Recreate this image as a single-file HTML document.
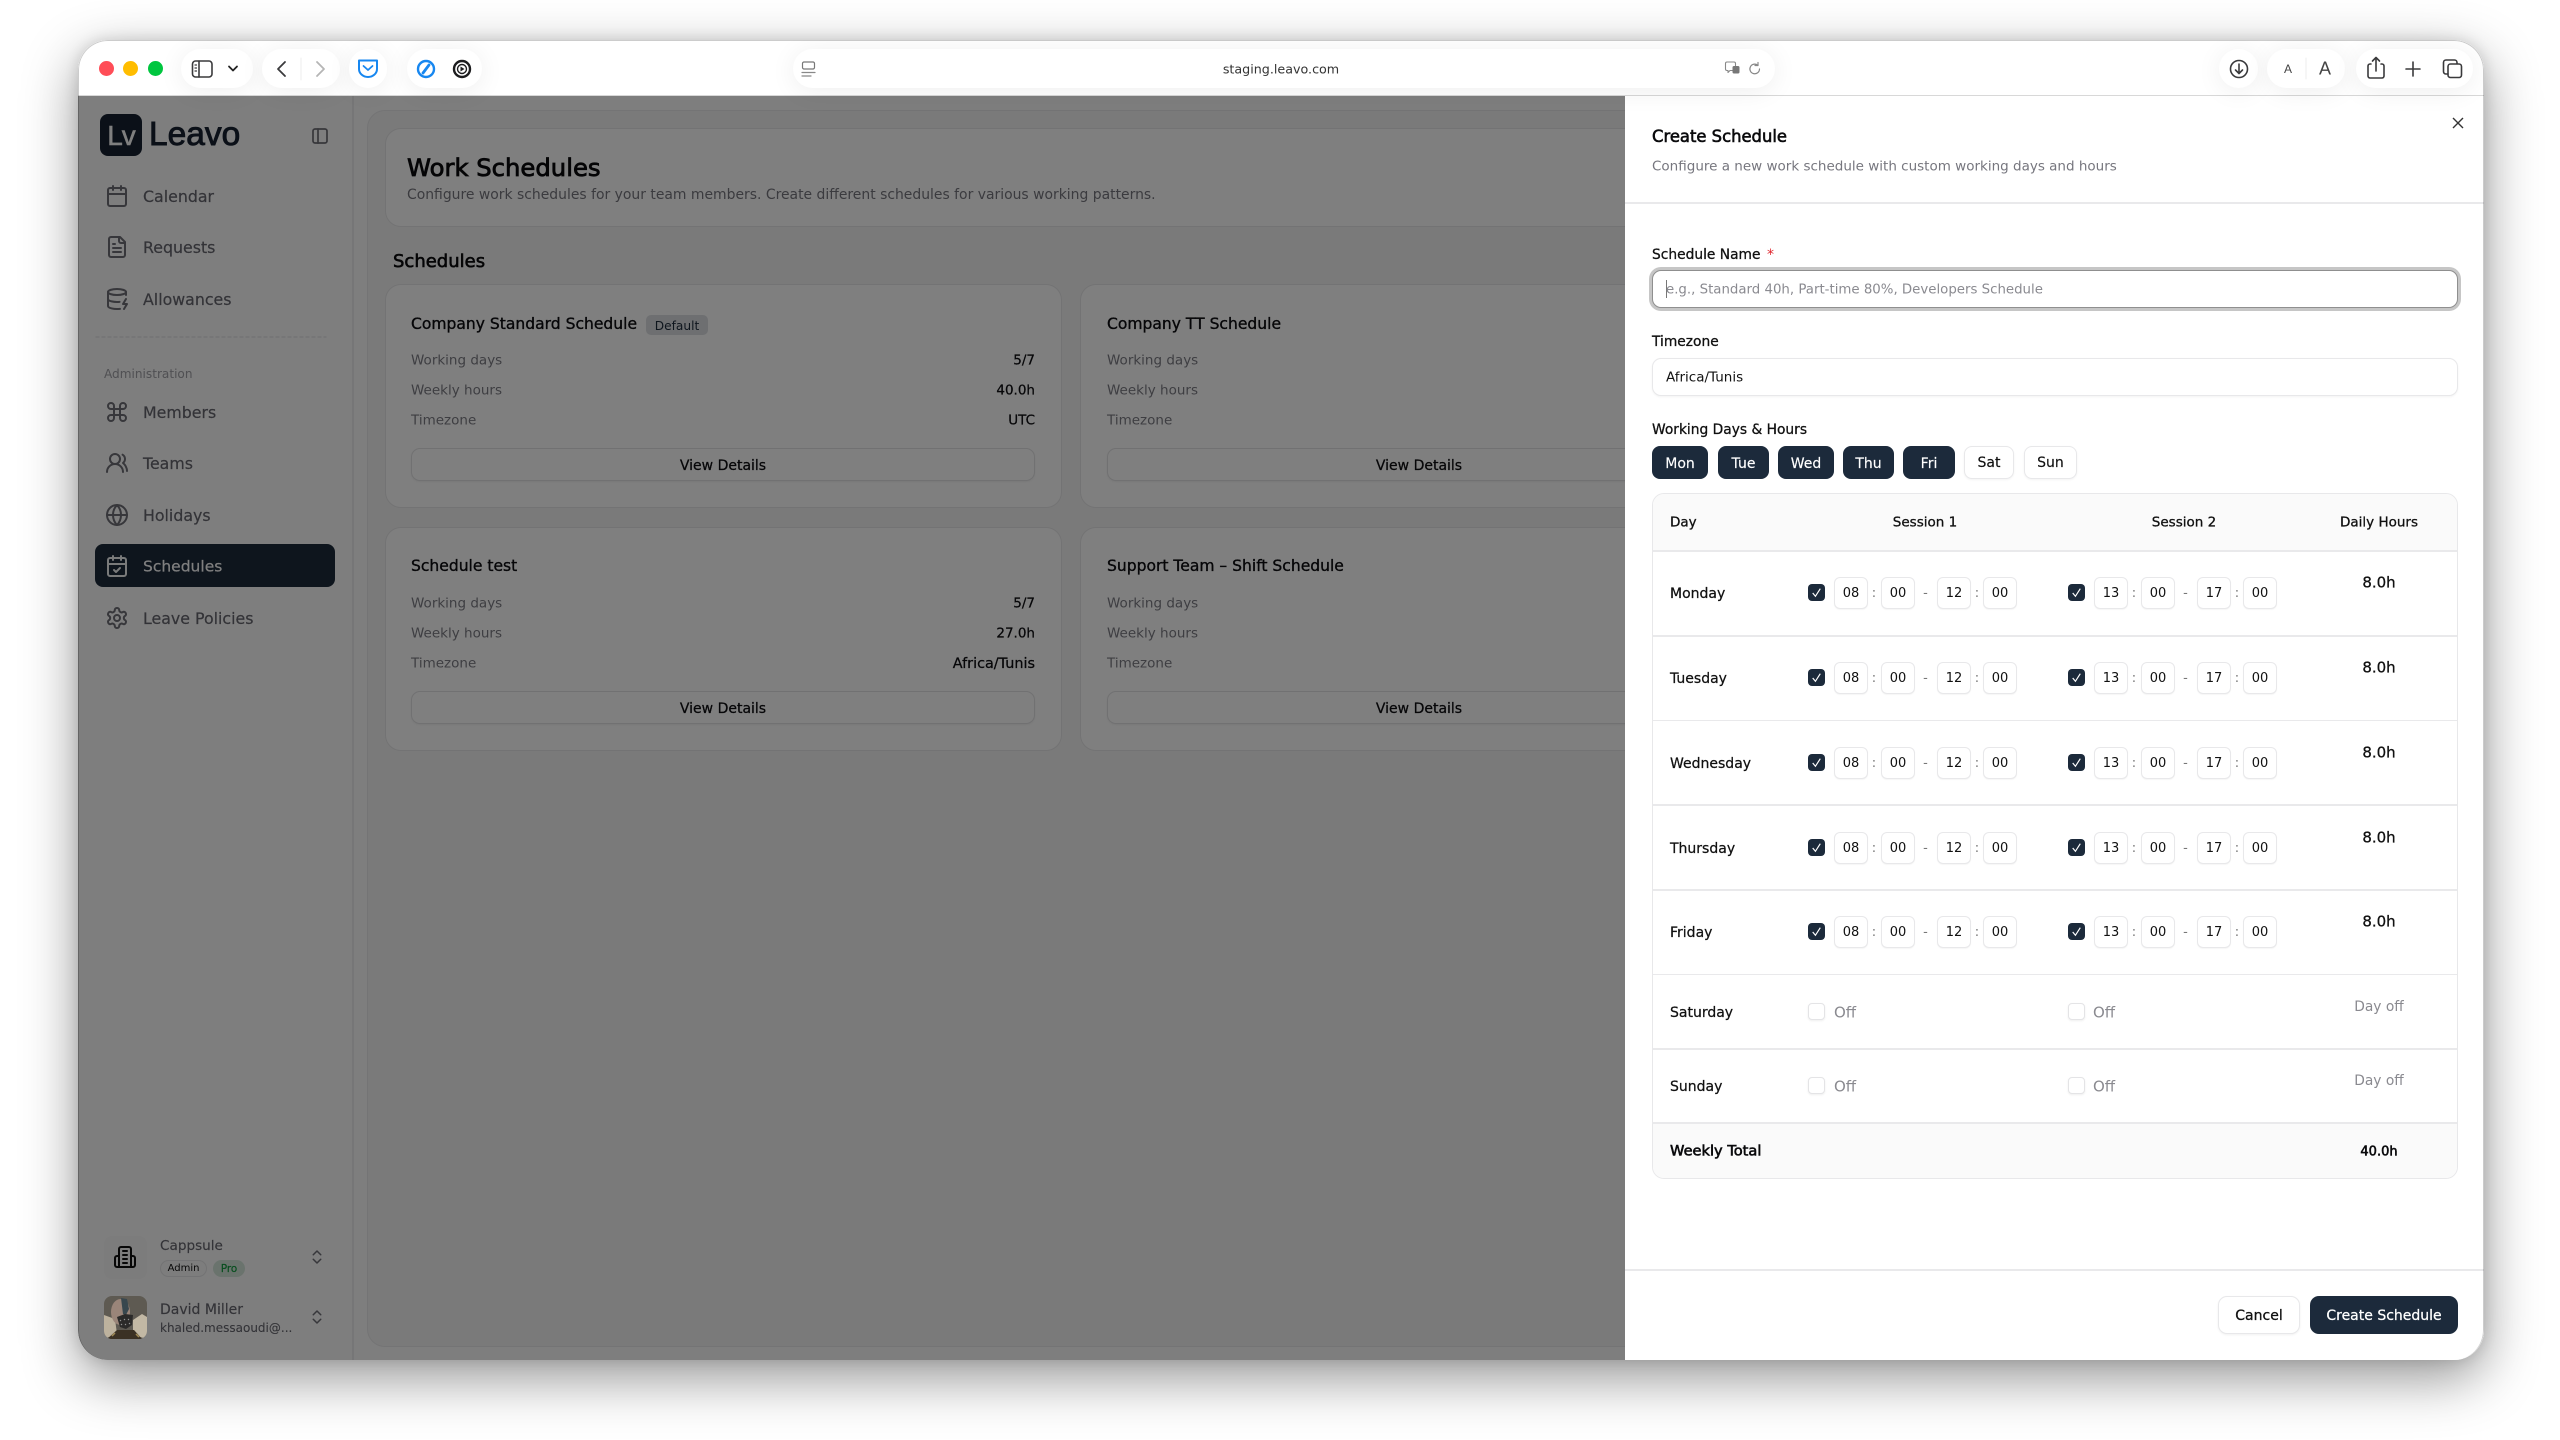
<!DOCTYPE html>
<html lang="en"><head><meta charset="utf-8"><title>Create Schedule</title>
<style>
*{box-sizing:border-box;margin:0;padding:0}
html,body{width:2560px;height:1440px;overflow:hidden;background:#fff;font-family:"DejaVu Sans","Liberation Sans",sans-serif;color:#111}
#shadow{position:absolute;left:78px;top:40px;width:2406px;height:1320px;border-radius:30px;box-shadow:0 18px 55px rgba(0,0,0,.42),0 0 14px rgba(0,0,0,.12)}
#win{position:absolute;left:0;top:0;width:2560px;height:1440px;clip-path:inset(40px 76px 80px 78px round 30px);background:#fff}
.a{position:absolute}
.t{position:absolute;white-space:nowrap;line-height:1;transform:translateY(calc(-50% + 1px))}
.c{position:absolute;white-space:nowrap;line-height:1;transform:translate(-50%,calc(-50% + 1px))}
.r{position:absolute;white-space:nowrap;line-height:1;transform:translate(-100%,calc(-50% + 1px))}
.card{position:absolute;background:#fff;border:1.5px solid #e6e6e8;border-radius:16px;width:677px;height:224px}
.nav{font-size:15.8px;left:143px;color:#66666f;-webkit-text-stroke:.2px #66666f}
.lab{font-size:13.5px;color:#7c7c84}
.val{font-size:13.5px;color:#0c0c10;-webkit-text-stroke:.25px #0c0c10}
.ct{font-size:15.55px;color:#0c0c10;-webkit-text-stroke:.35px #0c0c10}
.vd{position:absolute;height:33px;width:624px;border:1.5px solid #e2e2e4;border-radius:9px;background:#fff;text-align:center;font-size:14px;line-height:34px;color:#0c0c10;-webkit-text-stroke:.25px #0c0c10;box-shadow:0 1px 2px rgba(0,0,0,.06)}
.pill{position:absolute;top:49px;height:39px;border-radius:20px;background:#fff;box-shadow:0 3px 26px rgba(0,0,0,.07)}
#panel{position:absolute;left:1625px;top:96px;width:859px;height:1264px;background:#fff}
.lb{font-size:13.8px;color:#111;-webkit-text-stroke:.3px #111}
.field{position:absolute;left:1652px;width:806px;height:38px;border:1.5px solid #e8e8ea;border-radius:9px;background:#fff;box-shadow:0 1px 2px rgba(0,0,0,.05)}
.day{position:absolute;top:446px;height:33px;border-radius:8px;background:#1c2a3b;color:#fff;font-size:14px;text-align:center;line-height:36px;-webkit-text-stroke:.15px #fff}
.day.o{background:#fff;color:#111;border:1.5px solid #e8e8ea;line-height:33px;box-shadow:0 1px 2px rgba(0,0,0,.05);-webkit-text-stroke:.15px #111}
.line{position:absolute;left:1653px;width:804px;height:1.5px;background:#e9e9eb}
.th{font-size:13.5px;color:#111;-webkit-text-stroke:.3px #111}
.dn{font-size:14px;left:1670px;color:#111;-webkit-text-stroke:.25px #111}
.s{position:absolute;width:240px;height:32px}
.cb{position:absolute;left:0;top:7px;width:17px;height:17px;border-radius:4px;background:#1c2a3b}
.cb svg{position:absolute;left:2px;top:2px;width:13px;height:13px}
.n{position:absolute;top:0;width:34px;height:32px;border:1.5px solid #e8e8ea;border-radius:6px;background:#fff;font-size:13px;font-weight:400;text-align:center;line-height:32px;color:#111;box-shadow:0 1px 1px rgba(0,0,0,.04)}
.n1{left:26px}.n2{left:73px}.n3{left:129px}.n4{left:175px}
.p{position:absolute;top:0;font-size:13px;line-height:34px;color:#777;font-style:normal;transform:translateX(-50%)}
.p1{left:66px}.p2{left:117.5px}.p3{left:169px}
.cb0{position:absolute;width:17px;height:17px;border:1.5px solid #e4e4e6;border-radius:4px;background:#fff;box-shadow:0 1px 2px rgba(0,0,0,.07)}
.off{font-size:15px;color:#8a8a90}
.do{font-size:13.8px;color:#8a8a90}
.h8{font-size:15px;color:#111;-webkit-text-stroke:.3px #111}
</style></head><body>
<svg width="0" height="0" style="position:absolute"><defs>
<symbol id="cal" viewBox="0 0 24 24"><path d="M8 2v4M16 2v4"/><rect x="3" y="4" width="18" height="18" rx="2"/><path d="M3 10h18"/></symbol>
<symbol id="file" viewBox="0 0 24 24"><path d="M15 2H6a2 2 0 0 0-2 2v16a2 2 0 0 0 2 2h12a2 2 0 0 0 2-2V7z"/><path d="M14 2v4a2 2 0 0 0 2 2h4M10 9H8M16 13H8M16 17H8"/></symbol>
<symbol id="db" viewBox="0 0 24 24"><ellipse cx="12" cy="5" rx="9" ry="3"/><path d="M3 5V19A9 3 0 0 0 15 21.84M21 5V8M21 12L18 17H22L19 22M3 12A9 3 0 0 0 14.59 14.87"/></symbol>
<symbol id="cmd" viewBox="0 0 24 24"><path d="M15 6v12a3 3 0 1 0 3-3H6a3 3 0 1 0 3 3V6a3 3 0 1 0-3 3h12a3 3 0 1 0-3-3"/></symbol>
<symbol id="usr" viewBox="0 0 24 24"><path d="M18 21a8 8 0 0 0-16 0"/><circle cx="10" cy="8" r="5"/><path d="M22 20c0-3.37-2-6.5-4-8a5 5 0 0 0-.45-8.3"/></symbol>
<symbol id="glb" viewBox="0 0 24 24"><circle cx="12" cy="12" r="10"/><path d="M12 2a14.5 14.5 0 0 0 0 20 14.5 14.5 0 0 0 0-20M2 12h20"/></symbol>
<symbol id="chk" viewBox="0 0 24 24"><path d="M8 2v4M16 2v4"/><rect x="3" y="4" width="18" height="18" rx="2"/><path d="M3 10h18M9 16l2 2 4-4"/></symbol>
<symbol id="gear" viewBox="0 0 24 24"><path d="M12.22 2h-.44a2 2 0 0 0-2 2v.18a2 2 0 0 1-1 1.73l-.43.25a2 2 0 0 1-2 0l-.15-.08a2 2 0 0 0-2.73.73l-.22.38a2 2 0 0 0 .73 2.73l.15.1a2 2 0 0 1 1 1.72v.51a2 2 0 0 1-1 1.74l-.15.09a2 2 0 0 0-.73 2.73l.22.38a2 2 0 0 0 2.73.73l.15-.08a2 2 0 0 1 2 0l.43.25a2 2 0 0 1 1 1.73V20a2 2 0 0 0 2 2h.44a2 2 0 0 0 2-2v-.18a2 2 0 0 1 1-1.73l.43-.25a2 2 0 0 1 2 0l.15.08a2 2 0 0 0 2.73-.73l.22-.39a2 2 0 0 0-.73-2.73l-.15-.08a2 2 0 0 1-1-1.74v-.5a2 2 0 0 1 1-1.74l.15-.09a2 2 0 0 0 .73-2.73l-.22-.38a2 2 0 0 0-2.73-.73l-.15.08a2 2 0 0 1-2 0l-.43-.25a2 2 0 0 1-1-1.73V4a2 2 0 0 0-2-2z"/><circle cx="12" cy="12" r="3"/></symbol>
<symbol id="bld" viewBox="0 0 24 24"><path d="M6 22V4a2 2 0 0 1 2-2h8a2 2 0 0 1 2 2v18M6 11H4a2 2 0 0 0-2 2v7a2 2 0 0 0 2 2h16a2 2 0 0 0 2-2v-7a2 2 0 0 0-2-2h-2M10 6h4M10 10h4M10 14h4M10 18h4"/></symbol>
<symbol id="ud" viewBox="0 0 24 24"><path d="m7 15 5 5 5-5M7 9l5-5 5 5"/></symbol>
<symbol id="ck" viewBox="0 0 24 24"><path d="M5 13l5 6L19 5" fill="none" stroke="#fff" stroke-width="2.2"/></symbol>
<clipPath id="av"><rect x="104" y="1296" width="43" height="43" rx="8"/></clipPath>
</defs></svg>

<div id="shadow"></div>
<div id="win">
  <!-- app background -->
  <div class="a" style="left:78px;top:96px;width:1547px;height:1264px;background:#fcfcfc"></div>
  <div class="a" style="left:352px;top:96px;width:1.5px;height:1264px;background:#ececee"></div>
  <div class="a" style="left:367px;top:110px;width:2100px;height:1237px;background:#f5f5f5;border:1.5px solid #e8e8ea;border-radius:18px"></div>

  <!-- sidebar -->
  <div class="a" style="left:100px;top:114px;width:42px;height:42px;border-radius:8px;background:#172130"></div>
  <div class="c" style="left:121px;top:134.500px;font:28px 'Liberation Sans',sans-serif;color:#fff;letter-spacing:-1px;-webkit-text-stroke:.5px #fff">Lv</div>
  <div class="t" style="left:149px;top:134px;font:33.5px 'Liberation Sans',sans-serif;color:#172130;-webkit-text-stroke:.9px #172130">Leavo</div>
  <svg class="a" style="left:0;top:0" width="2560" height="1440" fill="none" stroke="#6e6e76" stroke-width="2" stroke-linecap="round" stroke-linejoin="round">
    <g stroke-width="1.7"><rect x="313" y="129" width="14" height="14" rx="2"/><path d="M318 129v14"/></g>
    <use href="#cal" x="105" y="184" width="24" height="24"/>
    <use href="#file" x="105" y="235" width="24" height="24"/>
    <use href="#db" x="105" y="287" width="24" height="24"/>
    <use href="#cmd" x="105" y="400" width="24" height="24"/>
    <use href="#usr" x="105" y="451" width="24" height="24"/>
    <use href="#glb" x="105" y="503" width="24" height="24"/>
    <use href="#gear" x="105" y="606" width="24" height="24"/>
    <path d="M96 337h230" stroke="#e4e4e6" stroke-width="1.2" stroke-dasharray="3 3"/>
    <use href="#ud" x="308" y="1247" width="18" height="20"/>
    <use href="#ud" x="308" y="1307" width="18" height="20"/>
  </svg>
  <div class="t nav" style="top:196px">Calendar</div>
  <div class="t nav" style="top:247px">Requests</div>
  <div class="t nav" style="top:299px">Allowances</div>
  <div class="t" style="left:104px;top:373px;font-size:12.1px;color:#a0a0a6">Administration</div>
  <div class="t nav" style="top:412px">Members</div>
  <div class="t nav" style="top:463px">Teams</div>
  <div class="t nav" style="top:515px">Holidays</div>
  <div class="a" style="left:95px;top:544px;width:240px;height:43px;border-radius:8px;background:#1c2a3b"></div>
  <svg class="a" style="left:105px;top:554px" width="24" height="24" fill="none" stroke="#fff" stroke-width="2" stroke-linecap="round" stroke-linejoin="round" opacity=".95"><use href="#chk" width="24" height="24"/></svg>
  <div class="t nav" style="top:566px;color:#fff;font-size:15.5px;-webkit-text-stroke:.2px #fff">Schedules</div>
  <div class="t nav" style="top:618px">Leave Policies</div>

  <div class="a" style="left:104px;top:1236px;width:43px;height:43px;border-radius:8px;background:#f8f8f8"></div>
  <svg class="a" style="left:113px;top:1245px" width="24" height="24" fill="none" stroke="#111" stroke-width="2" stroke-linecap="round" stroke-linejoin="round"><use href="#bld" width="24" height="24"/></svg>
  <div class="t" style="left:160px;top:1246px;font-size:13.6px;color:#66666f;-webkit-text-stroke:.15px #66666f">Cappsule</div>
  <div class="a" style="left:160px;top:1260px;width:47px;height:17px;border:1.2px solid #e6e6e8;border-radius:9px;background:#fbfbfb;font-size:10px;line-height:16px;text-align:center;color:#111">Admin</div>
  <div class="a" style="left:213px;top:1260px;width:32px;height:17px;border-radius:9px;background:#d4e6da;font-size:10.3px;line-height:18px;text-align:center;color:#0f9b3c;-webkit-text-stroke:.2px #0f9b3c">Pro</div>
  <div class="t" style="left:160px;top:1309px;font-size:14px;color:#66666f;-webkit-text-stroke:.15px #66666f">David Miller</div>
  <div class="t" style="left:160px;top:1327px;font-size:12px;color:#66666f;-webkit-text-stroke:.1px #66666f">khaled.messaoudi@...</div>

  <!-- main -->
  <div class="a" style="left:385px;top:128px;width:2060px;height:99px;background:#fff;border:1.5px solid #e6e6e8;border-radius:16px"></div>
  <div class="t" style="left:407px;top:167px;font-size:24.3px;color:#0a0a0c;-webkit-text-stroke:.8px #0a0a0c">Work Schedules</div>
  <div class="t" style="left:407px;top:195px;font-size:13.93px;color:#76767e">Configure work schedules for your team members. Create different schedules for various working patterns.</div>
  <div class="t" style="left:393px;top:261px;font-size:18px;color:#0a0a0c;-webkit-text-stroke:.6px #0a0a0c">Schedules</div>

  <div class="card" style="left:385px;top:284px"></div>
  <div class="t ct" style="left:411px;top:324px">Company Standard Schedule</div>
  <div class="a" style="left:646px;top:315px;width:62px;height:20px;border-radius:5px;background:#dcdfe3;font-size:12.2px;line-height:22px;text-align:center;color:#1c2a3b">Default</div>
  <div class="t lab" style="left:411px;top:360px">Working days</div><div class="r val" style="left:1035px;top:360px">5/7</div>
  <div class="t lab" style="left:411px;top:390px">Weekly hours</div><div class="r val" style="left:1035px;top:390px">40.0h</div>
  <div class="t lab" style="left:411px;top:420px">Timezone</div><div class="r val" style="left:1035px;top:420px">UTC</div>
  <div class="vd" style="left:411px;top:448px">View Details</div>

  <div class="card" style="left:1080px;top:284px"></div>
  <div class="t ct" style="left:1107px;top:324px">Company TT Schedule</div>
  <div class="t lab" style="left:1107px;top:360px">Working days</div>
  <div class="t lab" style="left:1107px;top:390px">Weekly hours</div>
  <div class="t lab" style="left:1107px;top:420px">Timezone</div>
  <div class="vd" style="left:1107px;top:448px">View Details</div>

  <div class="card" style="left:385px;top:527px"></div>
  <div class="t ct" style="left:411px;top:566px">Schedule test</div>
  <div class="t lab" style="left:411px;top:603px">Working days</div><div class="r val" style="left:1035px;top:603px">5/7</div>
  <div class="t lab" style="left:411px;top:633px">Weekly hours</div><div class="r val" style="left:1035px;top:633px">27.0h</div>
  <div class="t lab" style="left:411px;top:663px">Timezone</div><div class="r val" style="left:1035px;top:663px;font-size:14.4px">Africa/Tunis</div>
  <div class="vd" style="left:411px;top:691px">View Details</div>

  <div class="card" style="left:1080px;top:527px"></div>
  <div class="t ct" style="left:1107px;top:566px">Support Team – Shift Schedule</div>
  <div class="t lab" style="left:1107px;top:603px">Working days</div>
  <div class="t lab" style="left:1107px;top:633px">Weekly hours</div>
  <div class="t lab" style="left:1107px;top:663px">Timezone</div>
  <div class="vd" style="left:1107px;top:691px">View Details</div>

  <!-- dim overlay -->
  <div class="a" style="left:78px;top:96px;width:1547px;height:1264px;background:rgba(0,0,0,.5)"></div>

  <!-- avatar (over the dim) -->
  <svg class="a" style="left:0;top:0" width="2560" height="1440"><g clip-path="url(#av)">
    <rect x="104" y="1296" width="43" height="43" fill="#5e5a52"/>
    <path d="M104 1315l11 4 2 15-13 5z" fill="#bdb29e"/>
    <path d="M133 1320l9-6 5 3v22l-14-4z" fill="#c2b8a4"/>
    <path d="M106 1340l11-10h17l9 10z" fill="#3b3124"/>
    <path d="M112 1336l3-3M136 1334l3 3" stroke="#a08a55" stroke-width="1.500"/>
    <ellipse cx="120.500" cy="1312" rx="9.500" ry="13" fill="#9a8579"/>
    <path d="M121 1298l6 1 2 10-3 6-3-1z" fill="#38474e"/>
    <path d="M117 1317l8-3 8 1-1 10-6 4-6-2z" fill="#2b2a29"/>
    <path d="M120 1320l1 1M124 1319l1 1M128 1319l1 1M121 1324l1 1M125 1324l1 1M129 1323l1 1" stroke="#999" stroke-width="1"/>
  </g></svg>

  <!-- panel -->
  <div id="panel"></div>
  <div class="t" style="left:1652px;top:136px;font-size:16.4px;color:#0a0a0c;-webkit-text-stroke:.6px #0a0a0c">Create Schedule</div>
  <div class="t" style="left:1652px;top:166px;font-size:13.5px;color:#76767e">Configure a new work schedule with custom working days and hours</div>
  <div class="a" style="left:1625px;top:202px;width:859px;height:1.5px;background:#e9e9eb"></div>
  <svg class="a" style="left:2452px;top:117px" width="12" height="12" fill="none" stroke="#333" stroke-width="1.4"><path d="M1 1l10 10M11 1L1 11"/></svg>

  <div class="t lb" style="left:1652px;top:254.500px">Schedule Name</div>
  <div class="t" style="left:1767px;top:253.500px;font-size:14px;color:#e0242c">*</div>
  <div class="field" style="top:270px;border-color:#8f8f8f;box-shadow:0 0 0 3px #c6c6c6"></div>
  <div class="a" style="left:1666px;top:280px;width:1px;height:18px;background:#777"></div>
  <div class="t" style="left:1666px;top:289px;font-size:13.33px;color:#8a8a90">e.g., Standard 40h, Part-time 80%, Developers Schedule</div>
  <div class="t lb" style="left:1652px;top:342px">Timezone</div>
  <div class="field" style="top:358px"></div>
  <div class="t" style="left:1666px;top:377px;font-size:13.5px;color:#111">Africa/Tunis</div>
  <div class="t lb" style="left:1652px;top:430px">Working Days &amp; Hours</div>

  <div class="day" style="left:1652px;width:56px">Mon</div>
  <div class="day" style="left:1718px;width:51px">Tue</div>
  <div class="day" style="left:1778px;width:56px">Wed</div>
  <div class="day" style="left:1843px;width:51px">Thu</div>
  <div class="day" style="left:1903px;width:52px">Fri</div>
  <div class="day o" style="left:1964px;width:50px">Sat</div>
  <div class="day o" style="left:2024px;width:53px">Sun</div>

  <div class="a" style="left:1652px;top:493px;width:806px;height:686px;border:1.5px solid #e8e8ea;border-radius:12px;overflow:hidden;background:#fff">
    <div class="a" style="left:0;top:0;width:806px;height:57px;background:#fafafa"></div>
    <div class="a" style="left:0;top:628px;width:806px;height:60px;background:#fafafa"></div>
  </div>
  <div class="t th" style="left:1670px;top:522px">Day</div>
  <div class="c th" style="left:1925px;top:522px">Session 1</div>
  <div class="c th" style="left:2184px;top:522px">Session 2</div>
  <div class="c th" style="left:2379px;top:522px">Daily Hours</div>
  <div class="line" style="top:550px"></div>
  <div class="line" style="top:635px"></div>
  <div class="line" style="top:719.500px"></div>
  <div class="line" style="top:804px"></div>
  <div class="line" style="top:889px"></div>
  <div class="line" style="top:973.500px"></div>
  <div class="line" style="top:1048px"></div>
  <div class="line" style="top:1122px"></div>

  <div class="t dn" style="top:593px">Monday</div>
  <div class="s" style="left:1808px;top:577px"><i class="cb"><svg><use href="#ck" width="13" height="13"/></svg></i><b class="n n1">08</b><i class="p p1">:</i><b class="n n2">00</b><i class="p p2">-</i><b class="n n3">12</b><i class="p p3">:</i><b class="n n4">00</b></div>
  <div class="s" style="left:2068px;top:577px"><i class="cb"><svg><use href="#ck" width="13" height="13"/></svg></i><b class="n n1">13</b><i class="p p1">:</i><b class="n n2">00</b><i class="p p2">-</i><b class="n n3">17</b><i class="p p3">:</i><b class="n n4">00</b></div>
  <div class="c h8" style="left:2379px;top:582px">8.0h</div>

  <div class="t dn" style="top:678px">Tuesday</div>
  <div class="s" style="left:1808px;top:662px"><i class="cb"><svg><use href="#ck" width="13" height="13"/></svg></i><b class="n n1">08</b><i class="p p1">:</i><b class="n n2">00</b><i class="p p2">-</i><b class="n n3">12</b><i class="p p3">:</i><b class="n n4">00</b></div>
  <div class="s" style="left:2068px;top:662px"><i class="cb"><svg><use href="#ck" width="13" height="13"/></svg></i><b class="n n1">13</b><i class="p p1">:</i><b class="n n2">00</b><i class="p p2">-</i><b class="n n3">17</b><i class="p p3">:</i><b class="n n4">00</b></div>
  <div class="c h8" style="left:2379px;top:667px">8.0h</div>

  <div class="t dn" style="top:763px">Wednesday</div>
  <div class="s" style="left:1808px;top:747px"><i class="cb"><svg><use href="#ck" width="13" height="13"/></svg></i><b class="n n1">08</b><i class="p p1">:</i><b class="n n2">00</b><i class="p p2">-</i><b class="n n3">12</b><i class="p p3">:</i><b class="n n4">00</b></div>
  <div class="s" style="left:2068px;top:747px"><i class="cb"><svg><use href="#ck" width="13" height="13"/></svg></i><b class="n n1">13</b><i class="p p1">:</i><b class="n n2">00</b><i class="p p2">-</i><b class="n n3">17</b><i class="p p3">:</i><b class="n n4">00</b></div>
  <div class="c h8" style="left:2379px;top:752px">8.0h</div>

  <div class="t dn" style="top:848px">Thursday</div>
  <div class="s" style="left:1808px;top:832px"><i class="cb"><svg><use href="#ck" width="13" height="13"/></svg></i><b class="n n1">08</b><i class="p p1">:</i><b class="n n2">00</b><i class="p p2">-</i><b class="n n3">12</b><i class="p p3">:</i><b class="n n4">00</b></div>
  <div class="s" style="left:2068px;top:832px"><i class="cb"><svg><use href="#ck" width="13" height="13"/></svg></i><b class="n n1">13</b><i class="p p1">:</i><b class="n n2">00</b><i class="p p2">-</i><b class="n n3">17</b><i class="p p3">:</i><b class="n n4">00</b></div>
  <div class="c h8" style="left:2379px;top:837px">8.0h</div>

  <div class="t dn" style="top:932px">Friday</div>
  <div class="s" style="left:1808px;top:916px"><i class="cb"><svg><use href="#ck" width="13" height="13"/></svg></i><b class="n n1">08</b><i class="p p1">:</i><b class="n n2">00</b><i class="p p2">-</i><b class="n n3">12</b><i class="p p3">:</i><b class="n n4">00</b></div>
  <div class="s" style="left:2068px;top:916px"><i class="cb"><svg><use href="#ck" width="13" height="13"/></svg></i><b class="n n1">13</b><i class="p p1">:</i><b class="n n2">00</b><i class="p p2">-</i><b class="n n3">17</b><i class="p p3">:</i><b class="n n4">00</b></div>
  <div class="c h8" style="left:2379px;top:921px">8.0h</div>

  <div class="t dn" style="top:1012px">Saturday</div>
  <div class="cb0" style="left:1808px;top:1003px"></div><div class="t off" style="left:1834px;top:1012px">Off</div>
  <div class="cb0" style="left:2068px;top:1003px"></div><div class="t off" style="left:2093px;top:1012px">Off</div>
  <div class="c do" style="left:2379px;top:1007px">Day off</div>

  <div class="t dn" style="top:1086px">Sunday</div>
  <div class="cb0" style="left:1808px;top:1077px"></div><div class="t off" style="left:1834px;top:1086px">Off</div>
  <div class="cb0" style="left:2068px;top:1077px"></div><div class="t off" style="left:2093px;top:1086px">Off</div>
  <div class="c do" style="left:2379px;top:1081px">Day off</div>

  <div class="t" style="left:1670px;top:1151px;font-size:14.6px;color:#0a0a0c;-webkit-text-stroke:.6px #0a0a0c">Weekly Total</div>
  <div class="c" style="left:2379px;top:1151px;font-size:13px;color:#0a0a0c;-webkit-text-stroke:.6px #0a0a0c">40.0h</div>

  <div class="a" style="left:1625px;top:1269px;width:859px;height:1.5px;background:#e9e9eb"></div>
  <div class="a" style="left:2218px;top:1296px;width:82px;height:38px;border:1.5px solid #e8e8ea;border-radius:9px;background:#fff;font-size:14px;line-height:38px;text-align:center;color:#111;-webkit-text-stroke:.3px #111;box-shadow:0 1px 2px rgba(0,0,0,.06)">Cancel</div>
  <div class="a" style="left:2310px;top:1296px;width:148px;height:38px;border-radius:9px;background:#1c2a3b;font-size:14px;line-height:41px;text-align:center;color:#fff;-webkit-text-stroke:.25px #fff">Create Schedule</div>

  <!-- toolbar -->
  <div class="a" style="left:78px;top:40px;width:2406px;height:56px;background:#fff;border-bottom:1px solid #d8d8d8"></div>
  <div class="pill" style="left:181px;width:72px"></div>
  <div class="pill" style="left:262px;width:78px"></div>
  <div class="pill" style="left:349px;width:38px"></div>
  <div class="pill" style="left:407px;width:75px"></div>
  <div class="pill" style="left:793px;width:982px"></div>
  <div class="pill" style="left:2219px;width:39px"></div>
  <div class="pill" style="left:2267px;width:78px"></div>
  <div class="pill" style="left:2356px;width:117px"></div>
  <div class="a" style="left:98.500px;top:61px;width:15px;height:15px;border-radius:50%;background:#ff4d57"></div>
  <div class="a" style="left:123px;top:61px;width:15px;height:15px;border-radius:50%;background:#ffbd00"></div>
  <div class="a" style="left:147.500px;top:61px;width:15px;height:15px;border-radius:50%;background:#00c63f"></div>

  <svg class="a" style="left:0;top:0" width="2560" height="1440" fill="none" stroke="#3a3a3c" stroke-width="1.6" stroke-linecap="round" stroke-linejoin="round">
    <rect x="192.500" y="61" width="19.500" height="16" rx="3"/><path d="M199 61v16"/>
    <path d="M195 65h1.500M195 68h1.500M195 71h1.500" stroke-width="1.2"/>
    <path d="M229 66.500l4 4 4-4" stroke="#222" stroke-width="1.800"/>
    <path d="M285 62l-7 7 7 7" stroke-width="1.8"/>
    <path d="M301 58v22" stroke="#eee" stroke-width="1"/>
    <path d="M317 62l7 7-7 7" stroke="#b5b5b5" stroke-width="1.8"/>
    <path d="M359 60.500h18v8.500a9 8 0 0 1-18 0z" stroke="#1787f0" stroke-width="2"/>
    <path d="M363.500 66l4.500 4 4.500-4" stroke="#1787f0" stroke-width="1.8"/>
    <circle cx="426" cy="69" r="8" stroke="#1787f0" stroke-width="2.4"/><path d="M423 73l6-8" stroke="#1787f0" stroke-width="2.8"/>
    <circle cx="462" cy="69" r="8" stroke="#1d1d1f" stroke-width="2.4"/><circle cx="462" cy="69" r="4.500" stroke="#1d1d1f" stroke-width="1.400"/><path d="M460.500 66.500l4 2.500-4 2.500z" fill="#1d1d1f" stroke="none"/>
    <rect x="802.500" y="62" width="12" height="7" rx="1.500" stroke="#777" stroke-width="1.2"/><path d="M802 72.500h13M802 76h9" stroke="#888" stroke-width="1.200"/>
    <g stroke="#888" stroke-width="1.100"><path d="M1727 62h7a1.500 1.500 0 0 1 1.500 1.500V69a1.500 1.500 0 0 1-1.500 1.500h-4l-2 2v-2h-1a1.500 1.500 0 0 1-1.500-1.500v-5.500a1.500 1.500 0 0 1 1.500-1.500z"/><rect x="1732.500" y="66" width="7" height="7.500" rx="1.500" fill="#777" stroke="none"/></g>
    <path d="M1759.500 69a4.800 4.800 0 1 1-1.800-3.800M1758 62.500v3h-3" stroke="#888" stroke-width="1.200"/>
    <circle cx="2239" cy="69" r="8.500"/><path d="M2239 64v9M2235.500 70l3.500 3.500 3.500-3.500"/>
    <path d="M2306 58v21" stroke="#eee" stroke-width="1"/>
    <path d="M2371 64h-1a2 2 0 0 0-2 2v10a2 2 0 0 0 2 2h12a2 2 0 0 0 2-2V66a2 2 0 0 0-2-2h-1M2376 71V58M2372.500 61l3.500-3.500 3.500 3.500"/>
    <path d="M2413 62v14M2406 69h14"/>
    <path d="M2448 74h-2a2.500 2.500 0 0 1-2.500-2.500v-9A2.500 2.500 0 0 1 2446 60h8.500a2.500 2.500 0 0 1 2.500 2.500v1"/><rect x="2448" y="64" width="13.500" height="13.500" rx="2.500"/>
  </svg>
  <div class="c" style="left:1281px;top:69px;font-size:12.7px;color:#333">staging.leavo.com</div>
  <div class="c" style="left:2288px;top:68px;font:12px 'Liberation Sans',sans-serif;color:#444">A</div>
  <div class="c" style="left:2325px;top:68px;font:18px 'Liberation Sans',sans-serif;color:#444">A</div>

  <div class="a" style="left:78px;top:40px;width:2406px;height:1320px;border:1.5px solid rgba(0,0,0,.2);border-bottom:0;border-radius:30px"></div>
</div>
</body></html>
